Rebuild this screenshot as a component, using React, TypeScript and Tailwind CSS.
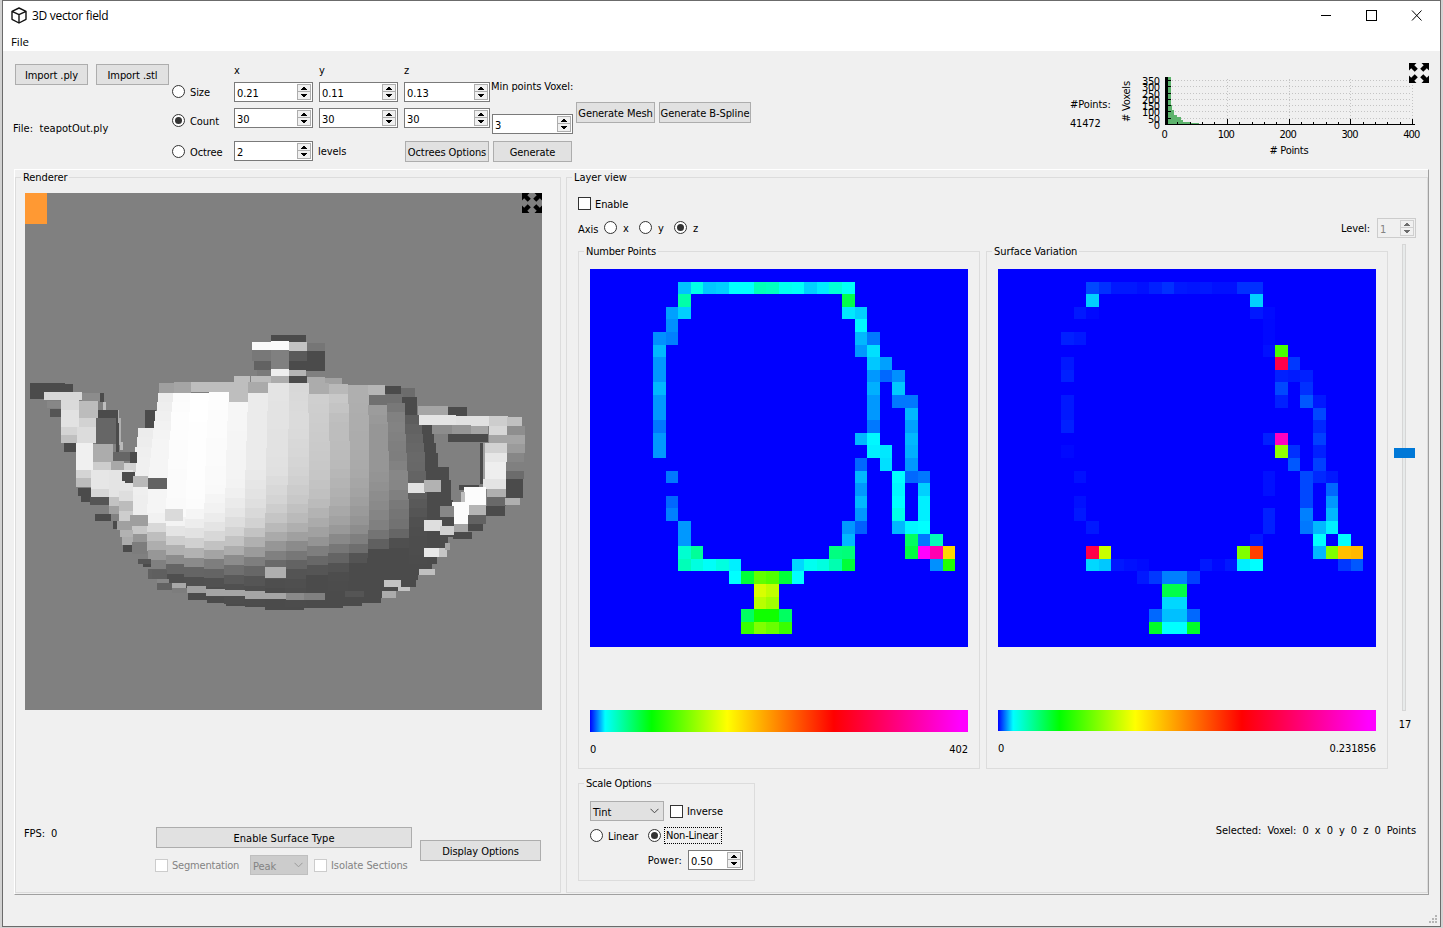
import React from "react";

const FONT = "font-['DejaVu_Sans_Condensed','DejaVu_Sans','Noto_Sans',sans-serif]";

function Label({ children, className = "" }: { children: React.ReactNode; className?: string }) {
  return <div className={`h-[14px] leading-[16px] whitespace-pre ${className}`}>{children}</div>;
}

function Button({ children, className = "" }: { children: React.ReactNode; className?: string }) {
  return (
    <button className={`flex h-[21px] shrink-0 items-center justify-center border border-[#adadad] bg-[#e1e1e1] pt-[2px] leading-[14px] whitespace-nowrap ${className}`}>
      {children}
    </button>
  );
}

function Arrow({ up, disabled }: { up?: boolean; disabled?: boolean }) {
  return (
    <svg width="6" height="3" viewBox="0 0 6 3" shapeRendering="crispEdges" className="block">
      <path d={up ? "M2 0h2v1h1v1h1v1H0V2h1V1h1z" : "M0 0h6v1H5v1H4v1H2V2H1V1H0z"} fill={disabled ? "#6d6d6d" : "#000"} />
    </svg>
  );
}

function Spin({ value, className = "", disabled }: { value: string; className?: string; disabled?: boolean }) {
  return (
    <div className={`flex h-[20px] shrink-0 items-center justify-between border pr-px pl-[2px] ${disabled ? "border-[#cccccc] bg-[#f0f0f0] text-[#838383]" : "border-[#7a7a7a] bg-white"} ${className}`}>
      <span className="pt-[3px] leading-[14px]">{value}</span>
      <div className={`flex h-[16px] w-[14px] flex-col border bg-[#f0f0f0] ${disabled ? "border-[#cfcfcf]" : "border-[#adadad]"}`}>
        <div className={`flex h-[7px] items-center justify-center border-b ${disabled ? "border-[#cfcfcf]" : "border-[#adadad]"}`}>
          <Arrow up disabled={disabled} />
        </div>
        <div className="flex h-[7px] items-center justify-center">
          <Arrow disabled={disabled} />
        </div>
      </div>
    </div>
  );
}

function Radio({ checked }: { checked?: boolean }) {
  return (
    <span className="-mt-px flex size-[13px] shrink-0 items-center justify-center rounded-full border border-[#333] bg-white">
      {checked && <span className="size-[7px] rounded-full bg-[#333]" />}
    </span>
  );
}

function Check({ disabled }: { disabled?: boolean }) {
  return <span className={`size-[13px] shrink-0 border bg-white ${disabled ? "border-[#cccccc]" : "border-[#333]"}`} />;
}

function Combo({ value, className = "", disabled }: { value: string; className?: string; disabled?: boolean }) {
  return (
    <div className={`flex h-[20px] shrink-0 items-center justify-between border pr-[4px] pl-[2px] ${disabled ? "border-[#bfbfbf] bg-[#cccccc] text-[#838383]" : "border-[#adadad] bg-[#e1e1e1]"} ${className}`}>
      <span className="pt-[3px] leading-[14px]">{value}</span>
      <svg width="9" height="6" viewBox="0 0 9 6" className="block">
        <path d="M0.5 0.8 4.5 4.8 8.5 0.8" fill="none" stroke={disabled ? "#9a9a9a" : "#444"} strokeWidth="1" />
      </svg>
    </div>
  );
}

function Group({ title, className = "", legend = "", children }: { title: string; className?: string; legend?: string; children: React.ReactNode }) {
  return (
    <fieldset className={`min-w-0 shrink-0 border border-[#dcdcdc] ${className}`}>
      <legend className={`h-[14px] px-[2px] leading-[16px] whitespace-nowrap ${legend}`}>{title}</legend>
      {children}
    </fieldset>
  );
}

function Expand({ className = "" }: { className?: string }) {
  const arrow = "M0 0H7.5L5.3 2.2 8.8 5.7 5.7 8.8 2.2 5.3 0 7.5z";
  return (
    <svg width="20" height="20" viewBox="0 0 20 20" className={className}>
      {[0, 90, 180, 270].map((a) => (
        <path key={a} d={arrow} transform={`rotate(${a} 10 10)`} />
      ))}
    </svg>
  );
}

/* Heat map rows: "row|column:colour"; a two digit colour is a green level on full blue. */
const POINTS = `1|7:c3 8:00ffe8 9:c8 10:d0 11:ff 12:ff 13:00ffb8 14:00ffc0 15:00fff0 16:00fff8 17:d0 18:ea 19:00ffd8 20:00fff8
2|7:00ffa8 20:00ff4a
3|6:a0 7:d0 20:e8 21:d0
4|6:90 21:f8
5|5:90 6:80 21:b8 22:78
6|5:b8 21:98 22:e0
7|5:98 22:c8 23:a0
8|5:98 22:98 23:68 24:90
9|5:b8 22:b0 24:c8
10|5:98 22:98 24:78 25:78
11|5:98 22:98 25:b8
12|5:78 22:78 25:a0
13|5:98 21:b8 22:f8 25:b8
14|5:98 22:f0 23:e8 25:b0
15|21:68 23:e0 25:98
16|6:78 21:b8 24:ff 25:68 26:78
17|21:98 24:f8 26:d0
18|6:68 21:b8 24:ff 26:f0
19|6:80 21:98 24:00ffe8 26:f0
20|7:98 20:98 21:60 24:b8 25:f8 26:ff
21|7:98 20:b8 25:00ff60 26:78 27:00ffb8
22|7:00ffd0 8:00ff98 19:00ff80 20:00ff78 25:00ff40 26:ff00ff 27:ff00b0 28:ffd800
23|7:00ffb8 8:00ffe0 9:00fff8 10:00ffe0 11:f0 16:d8 17:00fff0 18:00ffe0 19:00ffb0 20:00ff38 27:90 28:20ff00
24|11:ff 12:00ff38 13:60ff00 14:50ff00 15:00ff38 16:ff
25|13:d8ff00 14:c0ff00
26|13:b8ff00 14:a0ff00
27|12:00ff60 13:10ff00 14:10ff00 15:00ff60
28|12:38ff00 13:80ff00 14:68ff00 15:38ff00`;

const VARIATION = `1|7:48 8:30 9:18 10:18 11:10 12:20 13:30 14:18 15:14 16:18 17:10 18:10 19:30 20:30
2|7:d0 20:d0
3|6:18 7:08 20:18 21:0a
4|21:08
5|5:20 6:18 21:08
6|21:10 22:48ff00
7|5:18 22:ff0048 23:38
8|5:20 22:20 23:1a 24:20
9|22:48 24:30
10|5:18 22:20 24:58 25:18
11|5:18 25:48
12|5:20 25:28
13|21:20 22:ff00c0 25:40
14|5:08 22:90ff00 23:30 25:20
15|23:58 25:40
16|6:10 21:10 24:48 25:28 26:18
17|21:10 24:48 26:68
18|6:10 24:48 26:98
19|6:18 21:20 24:80 26:b8
20|7:18 21:20 24:78 25:b8 26:f0
21|20:18 25:ff 27:ff
22|7:ff0048 8:c8ff00 19:80ff00 20:ff4000 25:b8 26:80ff00 27:ffc000 28:ffb800
23|7:d8 8:c8 9:18 10:10 11:0a 16:18 17:08 18:18 19:f0 20:ff 27:38 28:58
24|11:18 12:38 13:80 14:80 15:40
25|13:00ff48 14:00ff48
26|13:d8 14:d8
27|12:68 13:c0 14:c0 15:68
28|12:00ff28 13:ff 14:ff 15:00ff28`;

function HeatMap({ data }: { data: string }) {
  return (
    <svg width="378" height="378" viewBox="0 0 30 30" shapeRendering="crispEdges" className="block bg-[#0000ff]">
      {data.split("\n").flatMap((line) => {
        const [row, cells] = line.split("|");
        return cells.split(" ").map((cell) => {
          const [col, c] = cell.split(":");
          return <rect key={`${row}-${col}`} x={col} y={row} width="1" height="1" fill={c.length === 2 ? `#00${c}ff` : `#${c}`} />;
        });
      })}
    </svg>
  );
}

const gray = (v: number) => {
  const n = Math.round(v);
  return `rgb(${n},${n},${n})`;
};

/* Column boundaries of the pot's body at its top, middle and bottom. */
const EDGES: number[][] = [
  [385, 338, 345], [420, 386, 385], [463, 442, 438], [513, 500, 492], [568, 555, 552], [627, 617, 613], [685, 676, 672], [744, 738, 735],
  [807, 803, 797], [864, 866, 860], [925, 929, 924], [983, 990, 986], [1042, 1048, 1040], [1096, 1108, 1104], [1145, 1164, 1165], [1190, 1215, 1215],
];

/* Height and shade samples of each column. */
const SHADES: number[][][] = [
  [[323, 235], [420, 240], [580, 238], [610, 212], [640, 190], [665, 130], [700, 128]],
  [[218, 235], [350, 245], [590, 245], [620, 218], [650, 190], [700, 160], [718, 128], [736, 128], [755, 100], [775, 90]],
  [[218, 250], [300, 253], [590, 250], [620, 235], [650, 218], [690, 176], [715, 145], [740, 108], [770, 80], [790, 76]],
  [[218, 255], [550, 253], [620, 235], [650, 222], [680, 200], [710, 165], [740, 120], [770, 85], [800, 76]],
  [[215, 253], [500, 250], [580, 240], [640, 222], [670, 200], [700, 170], [730, 128], [760, 100], [790, 80], [830, 75]],
  [[218, 247], [500, 243], [570, 232], [630, 215], [660, 198], [690, 175], [720, 140], [750, 110], [790, 82], [850, 75]],
  [[218, 235], [450, 235], [540, 225], [610, 210], [650, 188], [690, 160], [720, 130], [750, 105], [790, 80], [855, 75]],
  [[188, 228], [450, 225], [540, 212], [610, 192], [650, 170], [690, 142], [720, 115], [760, 88], [800, 75], [860, 75]],
  [[188, 215], [300, 220], [450, 212], [540, 200], [610, 182], [650, 160], [690, 130], [735, 98], [770, 80], [860, 75]],
  [[222, 208], [450, 200], [540, 190], [620, 168], [670, 145], [700, 120], [740, 90], [770, 75], [850, 75]],
  [[222, 202], [300, 190], [430, 186], [540, 175], [620, 158], [670, 130], [710, 102], [750, 78], [840, 75]],
  [[222, 175], [450, 170], [540, 160], [620, 145], [680, 115], [710, 85], [740, 75], [840, 75]],
  [[255, 158], [330, 150], [450, 150], [560, 138], [630, 125], [670, 98], [700, 75], [830, 75]],
  [[248, 115], [300, 132], [400, 125], [480, 137], [560, 120], [630, 112], [665, 80], [690, 75], [800, 75]],
  [[285, 90], [340, 100], [420, 106], [470, 100], [560, 88], [620, 78], [760, 75]],
];

function edge(i: number, y: number) {
  const [a, b, c] = EDGES[i];
  const t = (y - 200) / 560;
  return Math.round(a * (1 - t) * (1 - 2 * t) + b * 4 * t * (1 - t) + c * t * (2 * t - 1));
}

function shade(stops: number[][], y: number) {
  for (let k = 1; k < stops.length; k++) {
    if (y <= stops[k][0]) {
      const [y0, s0] = stops[k - 1];
      const [y1, s1] = stops[k];
      return s0 + ((s1 - s0) * Math.max(0, y - y0)) / (y1 - y0);
    }
  }
  return stops[stops.length - 1][1];
}

/* x, y, width, height, shade of the loose voxels: lid, spout, handle and rim. */
const BACK: number[][] = [
  [753, 45, 105, 20, 75], [697, 66, 56, 26, 250], [753, 63, 54, 28, 250], [807, 66, 54, 27, 195], [861, 68, 53, 26, 118],
  [697, 91, 56, 33, 120], [753, 91, 54, 57, 128], [807, 93, 54, 30, 90], [807, 122, 54, 30, 75], [861, 93, 54, 60, 75],
  [702, 122, 50, 28, 98], [710, 149, 42, 20, 122], [752, 147, 55, 22, 238], [807, 149, 52, 20, 180],
  [642, 168, 48, 20, 190], [692, 168, 60, 20, 188], [752, 168, 55, 20, 172], [807, 168, 54, 22, 75], [861, 171, 54, 22, 172], [915, 174, 52, 20, 162],
  [417, 189, 46, 30, 160], [463, 187, 50, 32, 165], [513, 187, 52, 30, 190], [565, 187, 62, 30, 190], [627, 187, 58, 58, 190], [685, 187, 60, 32, 170],
  [864, 190, 62, 32, 172], [926, 192, 58, 33, 185], [984, 194, 60, 62, 175], [1044, 195, 52, 30, 182], [1044, 225, 54, 30, 112], [1096, 198, 48, 25, 75], [1144, 204, 41, 27, 108],
  [1098, 222, 50, 64, 112], [1146, 231, 46, 54, 75], [1148, 285, 45, 30, 88],
  [375, 270, 33, 54, 75], [382, 300, 26, 22, 75],
];

const FRONT: number[][] = [
  [627, 215, 57, 30, 190],
  [30, 188, 105, 50, 75], [135, 191, 24, 26, 75], [72, 217, 114, 24, 215], [186, 219, 55, 24, 140], [240, 219, 13, 26, 75], [249, 245, 8, 24, 190],
  [82, 243, 41, 20, 135], [90, 266, 33, 25, 85], [123, 241, 54, 30, 218], [123, 270, 54, 50, 226], [123, 320, 48, 26, 212], [123, 345, 48, 24, 192],
  [177, 243, 57, 51, 188], [177, 294, 52, 26, 210], [171, 320, 58, 50, 220], [234, 269, 60, 25, 75], [229, 294, 60, 78, 102], [288, 294, 10, 102, 75],
  [294, 269, 4, 40, 175], [298, 294, 4, 80, 175], [301, 366, 7, 25, 185], [132, 369, 36, 27, 75],
  [168, 370, 51, 80, 240], [168, 450, 45, 24, 212], [168, 474, 45, 28, 188], [219, 372, 60, 54, 172], [219, 426, 54, 24, 205], [279, 396, 51, 27, 102], [330, 396, 20, 33, 75],
  [273, 423, 40, 28, 168], [312, 429, 35, 27, 210], [213, 450, 54, 58, 230], [213, 507, 54, 23, 215],
  [267, 450, 72, 82, 228], [267, 531, 30, 27, 195], [297, 512, 42, 31, 222], [306, 456, 39, 28, 75], [315, 480, 24, 9, 75], [339, 468, 45, 33, 185], [384, 474, 57, 32, 98],
  [174, 503, 39, 24, 75], [183, 526, 30, 19, 75], [211, 531, 56, 25, 85], [225, 582, 48, 20, 75], [267, 558, 30, 24, 160], [273, 582, 24, 21, 130],
  [297, 543, 42, 30, 188], [297, 573, 42, 30, 205], [291, 603, 45, 27, 160], [300, 630, 38, 20, 178], [306, 650, 32, 25, 172], [279, 603, 12, 24, 75], [309, 675, 27, 20, 75],
  [331, 586, 53, 31, 158], [436, 566, 54, 36, 218], [336, 667, 46, 36, 125], [354, 716, 40, 15, 85], [368, 731, 26, 10, 75],
  [396, 750, 44, 26, 95], [411, 778, 36, 11, 135], [411, 789, 45, 20, 98], [456, 789, 43, 14, 168], [456, 804, 45, 16, 125], [501, 798, 57, 21, 160], [505, 819, 53, 20, 75],
  [558, 807, 58, 20, 165], [616, 809, 60, 20, 165], [676, 814, 60, 23, 165], [736, 818, 62, 19, 165], [797, 819, 56, 20, 138], [853, 818, 62, 21, 128],
  [735, 740, 63, 34, 175], [975, 812, 57, 20, 85],
  [1195, 258, 90, 28, 165], [1284, 261, 57, 26, 75], [1197, 285, 112, 30, 228], [1308, 288, 99, 29, 225], [1407, 289, 56, 29, 205], [1460, 291, 46, 27, 192],
  [1236, 315, 60, 26, 140], [1296, 316, 57, 25, 150], [1353, 318, 52, 25, 165], [1407, 318, 54, 28, 215], [1461, 318, 54, 28, 142],
  [1283, 342, 122, 25, 75], [1407, 345, 54, 24, 165], [1461, 345, 54, 27, 165], [1461, 371, 53, 28, 155], [1461, 399, 52, 27, 135], [1460, 426, 52, 27, 128], [1459, 453, 52, 25, 108], [1457, 478, 52, 56, 75],
  [1380, 370, 12, 122, 75], [1390, 368, 5, 130, 160], [1395, 369, 66, 31, 210], [1394, 399, 67, 28, 230], [1394, 426, 65, 52, 238], [1388, 478, 71, 30, 228], [1400, 507, 58, 25, 175],
  [1318, 495, 60, 15, 75], [1331, 500, 68, 57, 252], [1324, 515, 10, 35, 190], [1400, 532, 57, 25, 105], [1398, 557, 57, 30, 75], [1455, 534, 46, 20, 175],
  [1296, 546, 51, 66, 252], [1346, 556, 52, 29, 180], [1261, 558, 42, 33, 135], [1265, 591, 38, 28, 75], [1303, 612, 41, 24, 165], [1344, 585, 54, 27, 98], [1344, 612, 45, 21, 75], [1300, 636, 55, 22, 75],
  [1164, 488, 51, 31, 225], [1211, 480, 51, 36, 178], [1211, 600, 55, 32, 222], [1260, 619, 42, 25, 208], [1211, 683, 49, 28, 232], [1258, 685, 24, 26, 198], [1275, 668, 14, 22, 165],
  [1197, 746, 48, 19, 192], [1092, 780, 51, 20, 195], [1134, 801, 36, 13, 195], [1086, 814, 43, 20, 172],
];

function Teapot() {
  return (
    <svg width="517" height="517" viewBox="0 0 517 517" shapeRendering="crispEdges" className="block">
      <g transform="translate(-5 127) scale(0.333333)">
        <path
          d="M1197 315H1238V342H1243V370H1249V400H1254V440H1287V480H1293V540H1300V650H1283V690H1266V712H1252V732H1235V747H1223V765H1195V780H1188V800H1170V814H1129V834H1083V849H1026V858H969V864H852V870H735V861H676V858H618V848H562V839H505V812H456V776H440V750H396V718H390V700H420V600H1197Z"
          fill="#4b4b4b"
        />
        {BACK.map(([x, y, w, h, s], i) => (
          <rect key={i} x={x} y={y} width={w} height={h} fill={gray(s)} />
        ))}
        {SHADES.flatMap((stops, i) => {
          const top = stops[0][0];
          const end = stops[stops.length - 1][0];
          const rows = Math.max(1, Math.round((end - top) / 28.5));
          return Array.from({ length: rows }, (_, r) => {
            const y = Math.round(top + (r * (end - top)) / rows);
            const y2 = Math.round(top + ((r + 1) * (end - top)) / rows);
            const m = (y + y2) / 2;
            const x = edge(i, m);
            return <rect key={`${i}-${r}`} x={x} y={y} width={edge(i + 1, m) - x + 3} height={y2 - y + 1} fill={gray(shade(stops, m))} />;
          });
        })}
        {FRONT.map(([x, y, w, h, s], i) => (
          <rect key={i} x={x} y={y} width={w} height={h} fill={gray(s)} />
        ))}
      </g>
    </svg>
  );
}

function Histogram() {
  return (
    <svg width="322" height="118" viewBox="1115 51 322 118" className="block text-[11px]">
      <g shapeRendering="crispEdges">
        <g stroke="#c4c4c4" strokeDasharray="1 2">
          {[80.5, 86.5, 93.5, 99.5, 105.5, 111.5, 118.5].map((y) => (
            <path key={y} d={`M1166 ${y}H1412`} />
          ))}
          {[1227.5, 1289.5, 1350.5, 1412.5].map((x) => (
            <path key={x} d={`M${x} 79V124`} />
          ))}
        </g>
        <path d="M1166 77h5v28h1v5h2v5h3v2h4v3h2v2h8v1h8v1h-33z" fill="#5db36c" />
        <path d="M1165 77h3v47h-3z" fill="#000" />
        <path d="M1165 124.5H1415" stroke="#000" />
        <path d="M1168 80.5h3M1168 86.5h3M1168 93.5h3M1168 99.5h3M1168 105.5h3M1168 111.5h3M1168 118.5h3" stroke="#000" />
        {Array.from({ length: 21 }, (_, k) => {
          const x = Math.round(1165 + k * 12.36) + 0.5;
          return <path key={k} d={`M${x} 124V${k % 5 ? 122 : 119}`} stroke="#000" />;
        })}
      </g>
      {[350, 300, 250, 200, 150, 100, 50, 0].map((v, k) => (
        <text key={v} x="1160" y={85 + k * 6.25} textAnchor="end" textLength={v > 99 ? 18 : v ? 12 : 6}>{v}</text>
      ))}
      {[0, 100, 200, 300, 400].map((v, k) => (
        <text key={v} x={1164.5 + k * 61.8} y="138" textAnchor="middle" textLength={v ? 17 : 6}>{v}</text>
      ))}
      <text x="1289" y="154" textAnchor="middle" textLength="39"># Points</text>
      <text transform="translate(1130 101.500) rotate(-90)" textAnchor="middle" textLength="41"># Voxels</text>
    </svg>
  );
}

function Scale({ max, className = "" }: { max: string; className?: string }) {
  return (
    <div className="mt-[63px] w-[378px]">
      <div className={`bg-[linear-gradient(90deg,#0000ff_0%,#00ffff_4%,#00ff00_16.300%,#ffff00_36.300%,#ff0000_64.500%,#ff00ff_98%)] ${className}`} />
      <div className="mt-[10px] flex justify-between">
        <Label>0</Label>
        <Label>{max}</Label>
      </div>
    </div>
  );
}

export default function App() {
  return (
    <div className={`h-[928px] w-[1443px] overflow-hidden bg-[#d2d2d2] pl-[2px] text-[11px] tracking-[-0.08px] text-black ${FONT}`}>
      <div className="flex h-[927px] w-[1439px] flex-col border border-[#6b6b6b] bg-[#f0f0f0]">
        <header className="h-[50px] shrink-0 bg-white font-['Open_Sans','Noto_Sans',sans-serif] text-[12px] tracking-[-0.1px]">
          <div className="flex h-[28px] items-center pr-[18px] pl-[8px]">
            <svg width="16" height="17" viewBox="0 0 16 17" fill="none" stroke="#111" strokeWidth="1.400" strokeLinejoin="round">
              <path d="M8 1 15 4.300V12.300L8 16 1 12.300V4.300zM1 4.300 8 7.600 15 4.300M8 7.600V16" />
            </svg>
            <span className="ml-[5px] pt-[2px] leading-[16px] tracking-[-0.3px]">3D vector field</span>
            <svg className="ml-auto" width="101" height="11" viewBox="0 0 101 11" fill="none" stroke="#000">
              <path d="M0 5.500H10" shapeRendering="crispEdges" />
              <path d="M45.500 .5h10v10h-10z" shapeRendering="crispEdges" />
              <path d="M91 .5l9.500 10M100.500 .5l-9.500 10" />
            </svg>
          </div>
          <div className="pt-[2px] pl-[8px] text-[11.500px] leading-[21px]">File</div>
        </header>

        <section className="flex h-[118px] shrink-0">
          <div className="w-[169px] pt-[13px]">
            <div className="flex gap-[8px] pl-[12px]">
              <Button className="w-[73px]">Import .ply</Button>
              <Button className="w-[73px]">Import .stl</Button>
            </div>
            <Label className="mt-[36px] pl-[10px] tracking-[0.050px]">File:  teapotOut.ply</Label>
          </div>
          <div className="w-[62px] pt-[31px]">
            <div className="flex h-[20px] items-center gap-[5px]"><Radio /><Label>Size</Label></div>
            <div className="mt-[9px] flex h-[20px] items-center gap-[5px]"><Radio checked /><Label>Count</Label></div>
            <div className="mt-[11px] flex h-[20px] items-center gap-[5px]"><Radio /><Label>Octree</Label></div>
          </div>
          <div className="w-[79px] pt-[12px]">
            <Label>x</Label>
            <Spin value="0.21" className="mt-[5px]" />
            <Spin value="30" className="mt-[6px]" />
            <Spin value="2" className="mt-[13px]" />
          </div>
          <div className="ml-[6px] w-[79px] pt-[12px]">
            <Label>y</Label>
            <Spin value="0.11" className="mt-[5px]" />
            <Spin value="30" className="mt-[6px]" />
            <Label className="mt-[16px] -ml-px">levels</Label>
          </div>
          <div className="ml-[6px] w-[86px] pt-[12px]">
            <Label>z</Label>
            <Spin value="0.13" className="mt-[5px]" />
            <Spin value="30" className="mt-[6px]" />
            <Button className="mt-[13px] ml-px w-[84px]">Octrees Options</Button>
          </div>
          <div className="ml-px w-[82px] pt-[28px]">
            <Label>Min points Voxel:</Label>
            <Spin value="3" className="mt-[21px] ml-px" />
            <Button className="mt-[7px] ml-[2px] w-[79px]">Generate</Button>
          </div>
          <div className="ml-[3px] flex gap-[4px] pt-[51px]">
            <Button className="w-[79px]">Generate Mesh</Button>
            <Button className="w-[92px]">Generate B-Spline</Button>
          </div>
          <div className="ml-[319px] w-[45px] pt-[46px]">
            <Label>#Points:</Label>
            <Label className="mt-[5px] tracking-[-0.2px]">41472</Label>
          </div>
          <div className="relative">
            <Histogram />
            <Expand className="absolute top-[12px] left-[294px]" />
          </div>
        </section>

        <main className="ml-[11px] flex h-[726px] w-[1415px] shrink-0 gap-[5px] border border-t-white border-r-[#a0a0a0] border-b-[#a0a0a0] border-l-white">
          <Group title="Renderer" legend="-ml-[4px]" className="h-[723px] w-[546px] pl-[9px]">
            <div className="relative mt-[9px] h-[517px] w-[517px] bg-[#808080]">
              <Teapot />
              <div className="absolute top-0 left-0 h-[31px] w-[22px] bg-[#ff9933]" />
              <Expand className="absolute top-0 left-[497px]" />
            </div>
            <div className="mt-[116px] flex">
              <Label className="-ml-px w-[131px]">FPS:  0</Label>
              <div className="mt-px w-[257px] pl-px">
                <Button className="w-[256px] tracking-[0.050px]">Enable Surface Type</Button>
                <div className="-ml-px mt-[7px] flex h-[20px] items-center text-[#838383]">
                  <Check disabled />
                  <Label className="ml-[4px] w-[78px] tracking-[-0.2px]">Segmentation</Label>
                  <Combo value="Peak" disabled className="w-[58px]" />
                  <span className="w-[6px]" />
                  <Check disabled />
                  <Label className="ml-[4px]">Isolate Sections</Label>
                </div>
              </div>
              <Button className="mt-[14px] ml-[8px] w-[121px]">Display Options</Button>
            </div>
          </Group>

          <Group title="Layer view" legend="-ml-[6px]" className="h-[723px] w-[862px] pl-[11px]">
            <div className="mt-[13px] flex h-[13px] items-center gap-[4px]"><Check /><Label>Enable</Label></div>
            <div className="mt-[8px] flex h-[20px] w-[838px] items-center">
              <Label className="w-[26px] pt-px">Axis</Label>
              <Radio /><Label className="ml-[6px] w-[16px]">x</Label>
              <Radio /><Label className="ml-[6px] w-[16px]">y</Label>
              <Radio checked /><Label className="ml-[6px]">z</Label>
              <Label className="ml-auto">Level:</Label>
              <Spin value="1" disabled className="ml-[7px] w-[39px]" />
            </div>
            <div className="mt-[6px] flex h-[525px] gap-[6px]">
              <Group title="Number Points" legend="-ml-[6px] tracking-[-0.2px]" className="w-[402px] pl-[11px]">
                <div className="pt-[11px]"><HeatMap data={POINTS} /></div>
                <Scale max="402" className="h-[22px]" />
              </Group>
              <Group title="Surface Variation" legend="-ml-[6px]" className="w-[402px] pl-[11px]">
                <div className="pt-[11px]"><HeatMap data={VARIATION} /></div>
                <Scale max="0.231856" className="h-[21px]" />
              </Group>
              <div className="flex w-[22px] flex-col items-center">
                <div className="relative -ml-[2px] h-[467px] w-[4px] border border-[#d6d6d6] bg-[#e7eaea]">
                  <div className="absolute top-[203px] -left-[9px] h-[10px] w-[21px] bg-[#0078d7]" />
                </div>
                <Label className="mt-[6px]">17</Label>
              </div>
            </div>
            <div className="mt-[7px] flex w-[838px] justify-between">
              <Group title="Scale Options" legend="-ml-[6px] tracking-[-0.2px]" className="h-[105px] w-[177px] pl-[11px]">
                <div className="mt-[11px] flex items-center">
                  <Combo value="Tint" className="w-[74px]" />
                  <span className="w-[6px]" />
                  <Check />
                  <Label className="ml-[4px]">Inverse</Label>
                </div>
                <div className="mt-[6px] flex h-[17px] items-center">
                  <Radio />
                  <Label className="ml-[5px] w-[40px]">Linear</Label>
                  <Radio checked />
                  <div className="ml-[3px] h-[17px] w-[58px] border border-dotted border-black pl-px leading-[16px] tracking-[-0.2px] whitespace-nowrap">Non-Linear</div>
                </div>
                <div className="mt-[6px] flex items-center">
                  <Label className="w-[98px] pr-[6px] text-right tracking-[0.200px]">Power:</Label>
                  <Spin value="0.50" className="w-[55px]" />
                </div>
              </Group>
              <Label className="mt-[47px]">Selected:  Voxel:  0  x  0  y  0  z  0  Points</Label>
            </div>
          </Group>
        </main>

        <footer className="flex grow items-end justify-end pr-[3px] pb-[3px]">
          <svg width="8" height="8" viewBox="0 0 8 8" fill="#b5b5b5" shapeRendering="crispEdges">
            <path d="M6 0h2v2H6zM6 3h2v2H6zM3 3h2v2H3zM6 6h2v2H6zM3 6h2v2H3zM0 6h2v2H0z" />
          </svg>
        </footer>
      </div>
    </div>
  );
}
